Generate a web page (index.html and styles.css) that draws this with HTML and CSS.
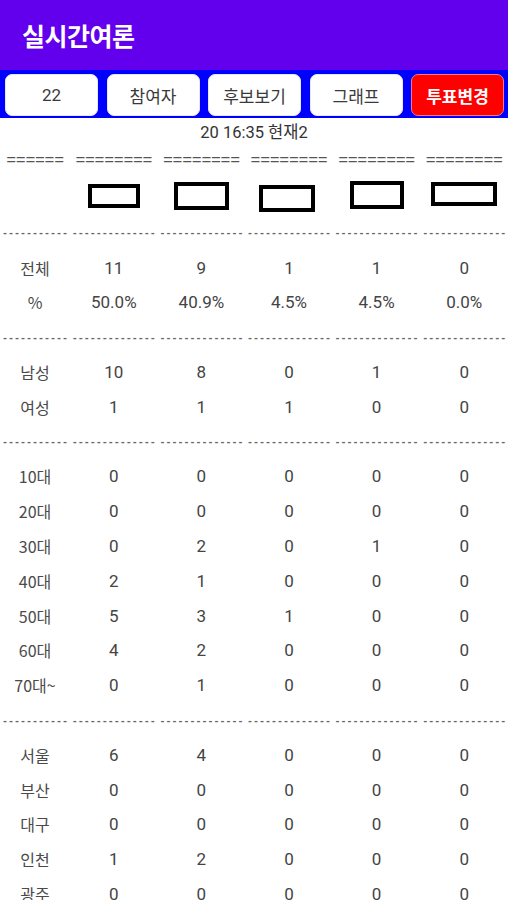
FILE: index.html
```html
<!DOCTYPE html>
<html lang="ko">
<head>
  <meta charset="UTF-8">
  <meta name="viewport" content="width=device-width, initial-scale=1.0">
  <title>실시간여론</title>
  <link rel="stylesheet" href="styles.css">
</head>
<body>

  <div class="app-bar">
    <h1>실시간여론</h1>
  </div>

  <!-- top menu -->
  <div class="menu">
    <button class="menu-btn">22</button>
    <button class="menu-btn">참여자</button>
    <button class="menu-btn">후보보기</button>
    <button class="menu-btn">그래프</button>
    <button class="menu-btn vote">투표변경</button>
  </div>

  <p class="updated">20 16:35 현재2</p>

  <table class="poll">
    <colgroup>
      <col class="label-col">
      <col><col><col><col><col>
    </colgroup>
    <tbody>
      <tr class="eq-row">
        <td>======</td>
        <td>========</td><td>========</td><td>========</td><td>========</td><td>========</td>
      </tr>
      <!-- candidate name boxes -->
      <tr class="name-row">
        <td></td>
        <td><span class="cand c1"></span></td>
        <td><span class="cand c2"></span></td>
        <td><span class="cand c3"></span></td>
        <td><span class="cand c4"></span></td>
        <td><span class="cand c5"></span></td>
      </tr>
      <tr class="dash-row">
        <td>-----------</td>
        <td>--------------</td><td>--------------</td><td>--------------</td><td>--------------</td><td>--------------</td>
      </tr>

      <tr><td>전체</td><td>11</td><td>9</td><td>1</td><td>1</td><td>0</td></tr>
      <tr><td>%</td><td>50.0%</td><td>40.9%</td><td>4.5%</td><td>4.5%</td><td>0.0%</td></tr>
      <tr class="dash-row">
        <td>-----------</td>
        <td>--------------</td><td>--------------</td><td>--------------</td><td>--------------</td><td>--------------</td>
      </tr>

      <tr><td>남성</td><td>10</td><td>8</td><td>0</td><td>1</td><td>0</td></tr>
      <tr><td>여성</td><td>1</td><td>1</td><td>1</td><td>0</td><td>0</td></tr>
      <tr class="dash-row">
        <td>-----------</td>
        <td>--------------</td><td>--------------</td><td>--------------</td><td>--------------</td><td>--------------</td>
      </tr>

      <tr><td>10대</td><td>0</td><td>0</td><td>0</td><td>0</td><td>0</td></tr>
      <tr><td>20대</td><td>0</td><td>0</td><td>0</td><td>0</td><td>0</td></tr>
      <tr><td>30대</td><td>0</td><td>2</td><td>0</td><td>1</td><td>0</td></tr>
      <tr><td>40대</td><td>2</td><td>1</td><td>0</td><td>0</td><td>0</td></tr>
      <tr><td>50대</td><td>5</td><td>3</td><td>1</td><td>0</td><td>0</td></tr>
      <tr><td>60대</td><td>4</td><td>2</td><td>0</td><td>0</td><td>0</td></tr>
      <tr><td>70대~</td><td>0</td><td>1</td><td>0</td><td>0</td><td>0</td></tr>
      <tr class="dash-row">
        <td>-----------</td>
        <td>--------------</td><td>--------------</td><td>--------------</td><td>--------------</td><td>--------------</td>
      </tr>

      <tr><td>서울</td><td>6</td><td>4</td><td>0</td><td>0</td><td>0</td></tr>
      <tr><td>부산</td><td>0</td><td>0</td><td>0</td><td>0</td><td>0</td></tr>
      <tr><td>대구</td><td>0</td><td>0</td><td>0</td><td>0</td><td>0</td></tr>
      <tr><td>인천</td><td>1</td><td>2</td><td>0</td><td>0</td><td>0</td></tr>
      <tr><td>광주</td><td>0</td><td>0</td><td>0</td><td>0</td><td>0</td></tr>
    </tbody>
  </table>

</body>
</html>
```

FILE: styles.css
```css
body {
  margin: 0;
  font-family: Roboto, "Noto Sans CJK KR", sans-serif;
  background: #fff;
  color: #3a3a3a;
}

.app-bar {
  background-color: #6200ee;
  height: 70px;
  display: flex;
  align-items: center;
  padding-left: 22px;
}

.app-bar h1 {
  margin: 0;
  color: #fff;
  font-family: "Noto Sans CJK KR", sans-serif;
  font-size: 25px;
  font-weight: 700;
  letter-spacing: -0.5px;
}

.menu {
  background-color: #0000ff;
  display: flex;
  gap: 8.5px;
  padding: 4px 4px 2px 5px;
}

.menu-btn {
  flex: 1;
  height: 42px;
  background-color: #fff;
  border: 1px solid #e8e8f0;
  border-radius: 7px;
  font-family: Roboto, "Noto Sans CJK KR", sans-serif;
  font-size: 17px;
  color: #3a3a3a;
  padding: 0;
}

.menu-btn.vote {
  background-color: #ff0000;
  border-color: #f07a8a;
  color: #fff;
  font-weight: 700;
}

.updated {
  margin: 0;
  height: 30px;
  line-height: 30px;
  text-align: center;
  font-size: 16.5px;
  color: #333;
}

/* Poll table */
.poll {
  width: 100%;
  border-collapse: collapse;
  table-layout: fixed;
}

.poll .label-col {
  width: 70px;
}

.poll tr {
  height: 34.8px;
}

.poll td {
  padding: 0;
  line-height: 20px;
  text-align: center;
  font-size: 17px;
  color: #444;
  white-space: nowrap;
  overflow: hidden;
}

.poll td:first-child {
  font-family: "Noto Sans CJK KR", Roboto, sans-serif;
  font-size: 16px;
  color: #4a4a4a;
}

.poll .eq-row {
  height: 26px;
}

.poll .eq-row td {
  font-family: "Liberation Mono", monospace;
  font-size: 16.5px;
  color: #555;
  letter-spacing: -0.3px;
}

.poll .dash-row td,
.poll .dash-row td:first-child {
  font-family: "Liberation Mono", monospace;
  font-size: 10px;
  line-height: 10px;
  font-weight: 700;
  color: #666;
  letter-spacing: 0;
  padding-top: 3px;
}

.poll .name-row {
  height: 41.5px;
}

.cand {
  display: inline-block;
  box-sizing: border-box;
  border: 4px solid #000;
  vertical-align: middle;
  position: relative;
}

.cand.c1 { width: 52px; height: 24px; top: 1px; }
.cand.c2 { width: 55px; height: 28px; top: 1px; }
.cand.c3 { width: 56px; height: 27px; top: 4px; margin-left: -3px; }
.cand.c4 { width: 54px; height: 28px; top: 0; }
.cand.c5 { width: 66px; height: 24px; top: -1px; }
```
